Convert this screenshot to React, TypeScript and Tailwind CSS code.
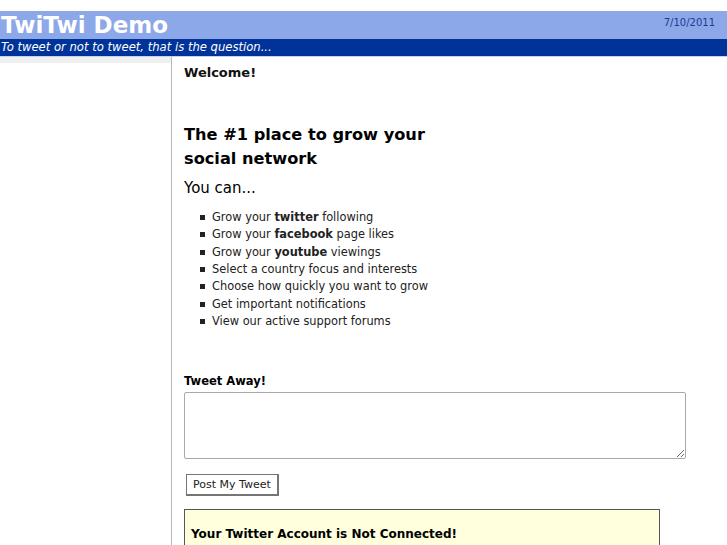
export default function App() {
  const items = [
    <>Grow your <b>twitter</b> following</>,
    <>Grow your <b>facebook</b> page likes</>,
    <>Grow your <b>youtube</b> viewings</>,
    <>Select a country focus and interests</>,
    <>Choose how quickly you want to grow</>,
    <>Get important notifications</>,
    <>View our active support forums</>,
  ];
  return (
    <div className="w-[727px] h-[545px] overflow-hidden bg-white font-['DejaVu_Sans',sans-serif] text-black">
      <div className="h-[11px]" />
      <div className="h-[28px] bg-[#8ca8e8] flex items-center justify-between">
        <div className="text-white font-bold text-[23px] leading-none pl-[1px]">TwiTwi Demo</div>
        <div className="text-[10px] text-[#1f3a93] pr-[12px] -mt-[6px]">7/10/2011</div>
      </div>
      <div className="h-[17px] bg-[#003399] text-white italic text-[11.6px] leading-[17px] pl-[1px]">
        To tweet or not to tweet, that is the question...
      </div>
      <div className="h-[1px] bg-[#c8d2f0]" />
      <div className="flex">
        <div className="w-[172px] shrink-0 border-r border-[#b8b8b8] h-[500px]">
          <div className="h-[6px] bg-[#f0f0f0]" />
        </div>
        <div className="pl-[12px] flex-1">
          <div className="mt-[8px] text-[13px] font-semibold leading-[16px] text-[#111]">Welcome!</div>
          <h1 className="mt-[42px] text-[16.2px] font-bold leading-[24px]">
            The #1 place to grow your<br />social network
          </h1>
          <div className="mt-[8px] text-[15px] leading-[18px]">You can...</div>
          <ul className="mt-[12px] text-[11.4px] leading-[17.33px] text-[#222]">
            {items.map((it, i) => (
              <li key={i} className="flex items-center">
                <span className="w-[5px] h-[5px] bg-[#222] ml-[16px] mr-[7px] shrink-0" />
                <span>{it}</span>
              </li>
            ))}
          </ul>
          <div className="mt-[44px] text-[11.5px] font-bold leading-[14px]">Tweet Away!</div>
          <textarea className="mt-[4px] block w-[502px] h-[67px] border border-[#a9a9a9] rounded-[2px] resize-y bg-white" />
          <button className="mt-[15px] ml-[2px] block border border-[#767676] border-r-[2px] border-b-[2px] bg-white text-[11px] px-[6px] h-[22px] text-[#222]">
            Post My Tweet
          </button>
          <div className="mt-[13px] w-[476px] h-[60px] bg-[#ffffdd] border border-[#555] pl-[6px] pt-[15px]">
            <div className="text-[12px] font-bold">Your Twitter Account is Not Connected!</div>
          </div>
        </div>
      </div>
    </div>
  );
}
